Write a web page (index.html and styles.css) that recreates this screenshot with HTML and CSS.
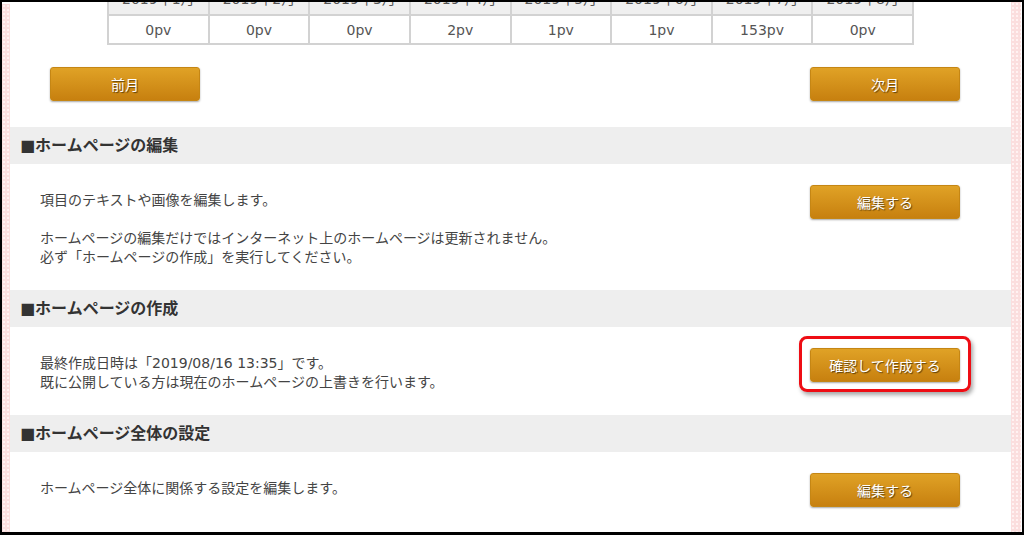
FILE: index.html
```html
<!DOCTYPE html>
<html lang="ja">
<head>
<meta charset="utf-8">
<link rel="stylesheet" href="styles.css">
</head>
<body>
<div class="frame">
  <div class="strip strip-left"></div>
  <div class="main">
    <div class="stats">
      <table class="pv">
        <tr class="head">
          <th>2019年1月</th><th>2019年2月</th><th>2019年3月</th><th>2019年4月</th><th>2019年5月</th><th>2019年6月</th><th>2019年7月</th><th>2019年8月</th>
        </tr>
        <tr>
          <td>0pv</td><td>0pv</td><td>0pv</td><td>2pv</td><td>1pv</td><td>1pv</td><td>153pv</td><td>0pv</td>
        </tr>
      </table>
    </div>
    <div class="nav">
      <a class="btn">前月</a>
      <a class="btn">次月</a>
    </div>

    <h2 class="sec-head">■ホームページの編集</h2>
    <div class="sec-body">
      <div class="sec-text">
        <p>項目のテキストや画像を編集します。</p>
        <p>ホームページの編集だけではインターネット上のホームページは更新されません。<br>必ず「ホームページの作成」を実行してください。</p>
      </div>
      <a class="btn">編集する</a>
    </div>

    <h2 class="sec-head">■ホームページの作成</h2>
    <div class="sec-body">
      <div class="sec-text">
        <p>最終作成日時は「2019/08/16 13:35」です。<br>既に公開している方は現在のホームページの上書きを行います。</p>
      </div>
      <a class="btn btn-marked">確認して作成する</a>
    </div>

    <h2 class="sec-head">■ホームページ全体の設定</h2>
    <div class="sec-body">
      <div class="sec-text">
        <p>ホームページ全体に関係する設定を編集します。</p>
      </div>
      <a class="btn">編集する</a>
    </div>
  </div>
  <div class="strip strip-right"></div>
  <div class="gap"></div>
</div>
</body>
</html>
```

FILE: styles.css
```css
html, body {
  margin: 0;
  padding: 0;
  background: #fff;
}

.frame {
  width: 1024px;
  height: 535px;
  box-sizing: border-box;
  border-top: 2px solid #000;
  border-left: 2px solid #000;
  border-right: 2px solid #000;
  border-bottom: 3px solid #000;
  display: flex;
  overflow: hidden;
  font-family: "DejaVu Sans", "Noto Sans CJK JP", sans-serif;
  color: #444;
}

.strip {
  flex: none;
  background-color: #fbdede;
  background-image: radial-gradient(circle, #fff2f2 0.9px, transparent 1.3px);
  background-size: 4px 4px;
}

.strip-left {
  width: 8px;
  margin-top: 2px;
}

.strip-right {
  width: 10px;
}

.gap {
  flex: none;
  width: 1px;
  background: #fff;
}

.main {
  flex: 1;
  background: #fff;
  overflow: hidden;
  min-width: 0;
}

.stats {
  margin-top: -16px;
}

.pv {
  margin: 0 auto;
  width: 807px;
  border-collapse: collapse;
  table-layout: fixed;
}

.pv th,
.pv td {
  border: 2px solid #d2d2d2;
  padding: 0;
  text-align: center;
  font-size: 14px;
  color: #555;
  font-weight: normal;
}

.pv th {
  height: 28px;
  padding-top: 0;
  box-sizing: border-box;
  vertical-align: top;
  background: #efefef;
}

.pv td {
  height: 27px;
  background: #fff;
}

.nav {
  display: flex;
  justify-content: space-between;
  margin: 22px 51px 0 40px;
}

.btn {
  display: flex;
  align-items: center;
  justify-content: center;
  flex: none;
  box-sizing: border-box;
  width: 150px;
  height: 34px;
  border: 1px solid #c58614;
  border-radius: 3px;
  background: linear-gradient(#e0a226, #c7800f);
  box-shadow: 0 1px 2px rgba(0, 0, 0, 0.35);
  color: #fff;
  font-size: 14px;
  text-shadow: 1px 1px 1px rgba(0, 0, 0, 0.55);
  cursor: pointer;
}

.sec-head {
  margin: 26px 0 0;
  height: 37px;
  line-height: 37px;
  padding-left: 10px;
  background: #eeeeee;
  font-size: 16px;
  font-weight: bold;
  color: #333;
}

.sec-body + .sec-head {
  margin-top: 0;
}

.sec-body {
  display: flex;
  justify-content: space-between;
  align-items: flex-start;
  padding: 21px 51px 23px 30px;
}

.sec-text {
  padding-top: 6px;
  font-size: 14px;
  line-height: 19px;
  color: #444;
}

.sec-text p {
  margin: 0;
}

.sec-text p + p {
  margin-top: 19px;
}

.btn-marked {
  position: relative;
}

.btn-marked::after {
  content: "";
  position: absolute;
  top: -13px;
  bottom: -11px;
  left: -12px;
  right: -12px;
  border: 3px solid #ee0d14;
  border-radius: 8px;
  box-shadow: 2px 3px 4px rgba(0, 0, 0, 0.35);
  pointer-events: none;
}
```
